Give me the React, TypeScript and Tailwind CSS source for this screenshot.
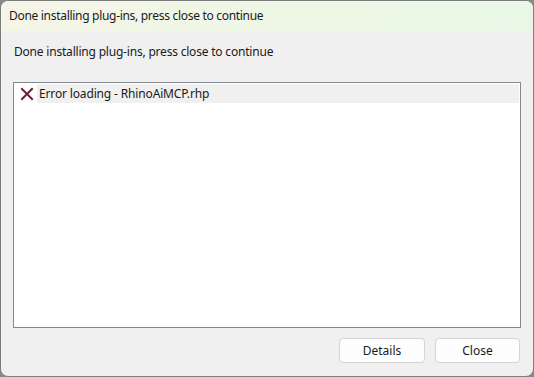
import React from 'react';

function ErrorIcon() {
  return (
    <svg width="14" height="14" viewBox="0 0 14 14" className="shrink-0">
      <path d="M2 2 L12 12 M12 2 L2 12" stroke="#6b1f3c" strokeWidth="2" strokeLinecap="square" fill="none" />
    </svg>
  );
}

export default function App() {
  const font = { fontFamily: '"Noto Sans", "Open Sans", sans-serif' };
  return (
    <div className="w-[534px] h-[377px] bg-[#8a8a8a]" style={font}>
      <div className="w-full h-full flex flex-col rounded-[8px] overflow-hidden border border-[#7c7c7c] bg-[#f0f0f0] text-[12px] text-[#1a1a1a]">
        {/* Title bar */}
        <div className="h-[30px] shrink-0 flex items-center pl-[8px] tracking-[-0.3px] bg-gradient-to-r from-[#f5f5e8] via-[#eef7e6] to-[#e9f8e6]">
          Done installing plug-ins, press close to continue
        </div>

        {/* Body */}
        <div className="flex-1 flex flex-col px-[12px] pt-[11px] pb-[13px]">
          <div className="h-[20px] flex items-center pl-px tracking-[-0.2px]">Done installing plug-ins, press close to continue</div>

          <div className="mt-[20px] flex-1 bg-white border border-[#828790] p-px">
            <div className="h-[19px] flex items-center">
              <div className="w-[22px] h-full flex items-center justify-center pl-[2px]">
                <ErrorIcon />
              </div>
              <div className="flex-1 h-full flex items-center bg-[#f0f0f0] pl-[2px] tracking-[-0.15px]">Error loading - RhinoAiMCP.rhp</div>
            </div>
          </div>

          <div className="mt-[10px] flex justify-end gap-[10px] pr-px">
            <button className="w-[86px] h-[25px] rounded-[4px] border border-[#d4d4d4] bg-[#fdfdfd] text-[12px]">Details</button>
            <button className="w-[85px] h-[25px] rounded-[4px] border border-[#d4d4d4] bg-[#fdfdfd] text-[12px]">Close</button>
          </div>
        </div>
      </div>
    </div>
  );
}
